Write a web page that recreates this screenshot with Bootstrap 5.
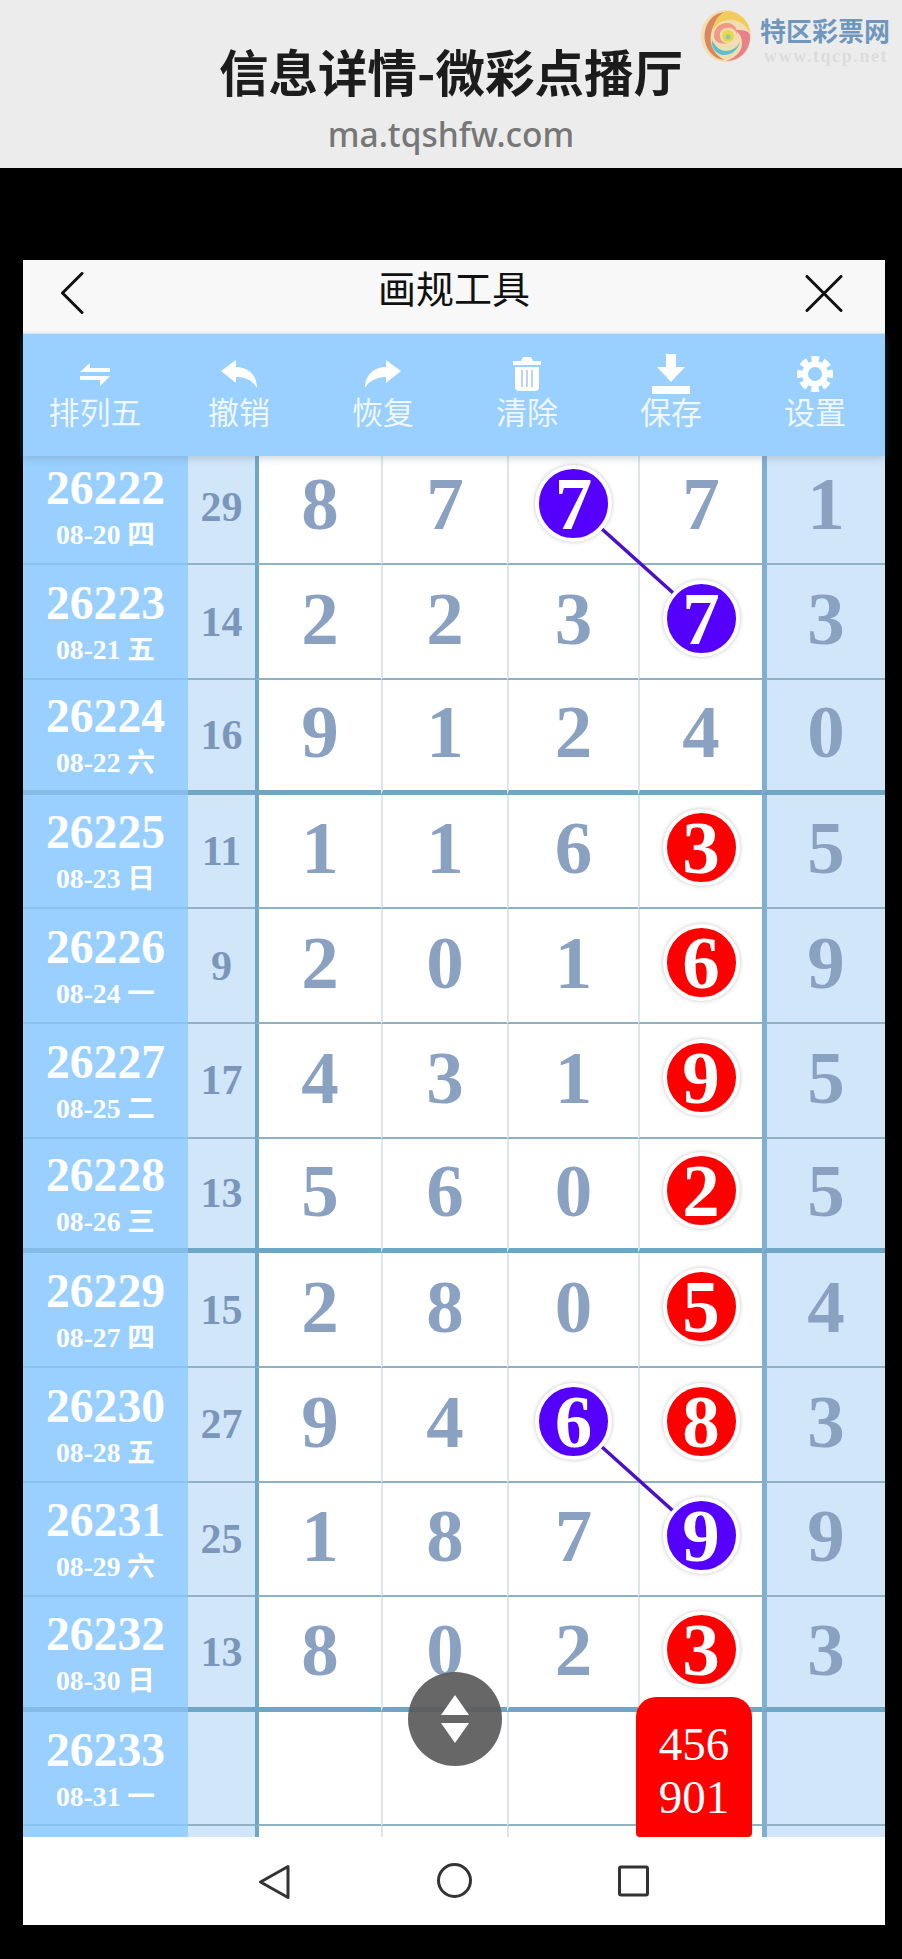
<!DOCTYPE html>
<html lang="zh">
<head>
<meta charset="utf-8">
<title>画规工具</title>
<link href="https://cdn.jsdelivr.net/npm/bootstrap@5.3.0/dist/css/bootstrap.min.css" rel="stylesheet">
<style>
html,body{background:#000;margin:0;height:1959px;overflow:hidden}
.pagehead{height:168px;background:#ececec;font-family:"Noto Sans CJK SC",sans-serif}
.headtitle{font-size:49.5px;font-weight:700;line-height:60px;padding-top:41px;color:#1c1c1c}
.headurl{font-size:33.5px;line-height:46px;color:#777;font-family:"Noto Sans",sans-serif;font-weight:500;padding-top:10px}
.logobox{top:9px;left:700px}
.logoname{left:60px;top:5px;font-size:26px;font-weight:700;line-height:32px;color:#6f97bd;white-space:nowrap}
.logourl{left:64px;top:38px;font:700 18px/18px "Liberation Serif",serif;color:#dcdcdc;letter-spacing:1.6px;white-space:nowrap}
.phone{margin:92px 17px 0 23px;width:862px;font-family:"Noto Sans CJK SC",sans-serif}
.topbar{height:73px;background:#f8f8f8;color:#111}
.toptitle{font-size:38px;line-height:54px;height:54px}
.chevron{left:37px;top:12px}
.closex{left:782px;top:15px}
.toolbar{height:123px;background:#99d0ff;box-shadow:0 3px 7px rgba(110,130,150,.3);z-index:3;padding-top:20px;border-top:1px solid #cfe6fb}
.toolitem{width:144px;flex:none;color:rgba(255,255,255,.85)}
.toolicon{height:40px}
.toollabel{font-size:31px;line-height:36px;margin-top:-1px}
.boardwrap{height:1381px;background:#fff}
.rowsbox{margin-top:-5.4px;font-family:"Liberation Serif","Noto Sans CJK SC",serif;font-weight:700}
.drow{height:114.67px}
.drow>div{border-bottom:2px solid #8fb1c2;box-sizing:border-box}
.drow.heavy>div{border-bottom:5px solid #6fa6c6}
.drow>.cissue{width:165px;background:#99d0ff;color:#fff;border-bottom-color:#8cc3ee;padding-top:3px}
.drow.heavy>.cissue{border-bottom-color:#85bbe6}
.drow>.csum{width:67px;background:#d2e6f9;color:#7a97bb;font-size:42px;padding-top:1px}
.drow>.cnum{color:#8aa1c1;font-size:75px;line-height:1;background:#fff;padding-bottom:6px}
.cnum.w1{width:126px;border-left:4px solid #6fa6c6}
.cnum.w2{width:126px;border-left:2px solid #dfe6ea}
.cnum.w3{width:131px;border-left:2px solid #dfe6ea}
.cnum.w4{width:124px;border-left:2px solid #dfe6ea}
.drow>.cside{width:123px;background:#d2e6f9;color:#8aa1c1;font-size:75px;line-height:1;border-left:5px solid #82aecf;padding-bottom:6px}
.issuenum{font-size:47.6px;line-height:48px}
.issuedate{font-size:27.6px;line-height:34px;margin-top:6px}
.ball{width:77px;height:77px;border:4px solid #fff;color:#fff;box-shadow:0 0 4px rgba(120,120,120,.45);z-index:2}
.ball-p{background:#5500ff}
.ball-r{background:#f00}
.linklayer{left:0;top:0;z-index:1;pointer-events:none}
.pickbox{left:613px;top:1241px;width:116px;height:140px;background:#f00;color:#fff;border-radius:20px 20px 4px 4px;z-index:2;font:400 47px/53px "Liberation Serif",serif;padding-top:21px}
.scrollbtn{left:385px;top:1216px;width:94px;height:94px;background:rgba(90,90,90,.92);z-index:4}
.bottomnav{height:88px;background:#fff;z-index:3}
</style>
</head>
<body>
<header class="pagehead position-relative text-center">
  <div class="headtitle">信息详情-微彩点播厅</div>
  <div class="headurl">ma.tqshfw.com</div>
  <div class="logobox position-absolute">
    <svg width="52" height="54" viewBox="0 0 52 54" class="d-block">
      <ellipse cx="26" cy="27" rx="25" ry="26" fill="#f1ddaf"/>
      <path d="M26 3C10 4 3 18 5 32c2 11 10 18 19 19C14 45 9 36 11 25 13 14 19 7 26 3Z" fill="#d9875f"/>
      <path d="M26 2c13 0 23 10 24 22-5-9-12-14-22-13C20 12 15 16 13 22 14 12 18 6 26 2Z" fill="#f0cc5e"/>
      <path d="M50 26c1 14-9 26-24 26 9-3 16-9 16-18 0-6-3-11-8-13 9 0 14 0 16 5Z" fill="#e8828a"/>
      <path d="M40 33c-2 8-9 14-18 13-7-2-11-8-10-15 3 6 7 10 13 11 6 0 12-3 15-9Z" fill="#5cc0cf"/>
      <path d="M14 27c0-8 6-13 13-13 7 0 11 6 10 12-1-5-5-8-10-7-5 0-8 4-7 9 1 4 4 6 8 6-7 2-14-1-14-7Z" fill="#ee9a84"/>
      <ellipse cx="28" cy="27" rx="6" ry="6" fill="#e7d64f"/>
      <ellipse cx="28" cy="28" rx="2.5" ry="2.5" fill="#8fc9a8"/>
    </svg>
    <div class="logoname position-absolute">特区彩票网</div>
    <div class="logourl position-absolute">www.tqcp.net</div>
  </div>
</header>

<main class="phone">
  <div class="topbar position-relative text-center">
    <svg class="chevron position-absolute" width="24" height="42" viewBox="0 0 24 42"><path d="M22 1.5 2.5 21 22 40.500" fill="none" stroke="#111" stroke-width="3" stroke-linecap="round" stroke-linejoin="round"/></svg>
    <div class="toptitle">画规工具</div>
    <svg class="closex position-absolute" width="38" height="37" viewBox="0 0 38 37"><path d="M2 1.500 36 35.500M36 1.500 2 35.500" fill="none" stroke="#111" stroke-width="3" stroke-linecap="round"/></svg>
  </div>

  <nav class="toolbar position-relative d-flex overflow-hidden">
    <div class="toolitem text-center">
      <div class="toolicon d-flex justify-content-center align-items-center"><svg width="30" height="23" viewBox="0 0 30 23"><path d="M0 9 10 0v5h20v4ZM0 13h30L20 23v-6H0Z" fill="#fff"/></svg></div>
      <div class="toollabel">排列五</div>
    </div>
    <div class="toolitem text-center">
      <div class="toolicon d-flex justify-content-center align-items-center"><svg width="36" height="28" viewBox="0 0 36 28"><path d="M0 11 15 0v7c12 0 21 8 21 21-4-7-11-11-21-11v6Z" fill="#fff"/></svg></div>
      <div class="toollabel">撤销</div>
    </div>
    <div class="toolitem text-center">
      <div class="toolicon d-flex justify-content-center align-items-center"><svg width="36" height="28" viewBox="0 0 36 28"><path d="M36 11 21 0v7C9 7 0 15 0 28c4-7 11-11 21-11v6Z" fill="#fff"/></svg></div>
      <div class="toollabel">恢复</div>
    </div>
    <div class="toolitem text-center">
      <div class="toolicon d-flex justify-content-center align-items-center"><svg width="30" height="34" viewBox="0 0 30 34"><path d="M9 4 11 0h8l2 4h8v4H1V4ZM3 10h24v20a4 4 0 0 1-4 4H7a4 4 0 0 1-4-4Z" fill="#fff"/><path d="M10 13v17M15 13v17M20 13v17" stroke="#a9c9e6" stroke-width="1.500"/></svg></div>
      <div class="toollabel">清除</div>
    </div>
    <div class="toolitem text-center">
      <div class="toolicon d-flex justify-content-center align-items-center"><svg width="38" height="40" viewBox="0 0 38 40"><path d="M14 0h10v13h9L19 28 5 13h9ZM0 32h38v8H0Z" fill="#fff"/></svg></div>
      <div class="toollabel">保存</div>
    </div>
    <div class="toolitem text-center">
      <div class="toolicon d-flex justify-content-center align-items-center"><svg width="36" height="36" viewBox="0 0 36 36"><circle cx="18" cy="18" r="15" fill="none" stroke="#fff" stroke-width="6" stroke-dasharray="7.500 4.280" transform="rotate(-15 18 18)"/><circle cx="18" cy="18" r="10" fill="none" stroke="#fff" stroke-width="6"/></svg></div>
      <div class="toollabel">设置</div>
    </div>
  </nav>

  <section class="boardwrap position-relative overflow-hidden">
    <svg class="linklayer position-absolute" width="862" height="1381">
      <path d="M550 47 678 162M550 965 678 1080" stroke="#4b12c4" stroke-width="3.500" fill="none"/>
    </svg>
    <div class="rowsbox">
      <div class="drow d-flex"><div class="cissue text-center d-flex flex-column justify-content-center"><div class="issuenum">26222</div><div class="issuedate">08-20 四</div></div><div class="csum d-flex justify-content-center align-items-center">29</div><div class="cnum w1 d-flex justify-content-center align-items-center">8</div><div class="cnum w2 d-flex justify-content-center align-items-center">7</div><div class="cnum w3 d-flex justify-content-center align-items-center"><span class="ball ball-p position-relative rounded-circle d-flex justify-content-center align-items-center">7</span></div><div class="cnum w4 d-flex justify-content-center align-items-center">7</div><div class="cside d-flex justify-content-center align-items-center">1</div></div>
      <div class="drow d-flex"><div class="cissue text-center d-flex flex-column justify-content-center"><div class="issuenum">26223</div><div class="issuedate">08-21 五</div></div><div class="csum d-flex justify-content-center align-items-center">14</div><div class="cnum w1 d-flex justify-content-center align-items-center">2</div><div class="cnum w2 d-flex justify-content-center align-items-center">2</div><div class="cnum w3 d-flex justify-content-center align-items-center">3</div><div class="cnum w4 d-flex justify-content-center align-items-center"><span class="ball ball-p position-relative rounded-circle d-flex justify-content-center align-items-center">7</span></div><div class="cside d-flex justify-content-center align-items-center">3</div></div>
      <div class="drow heavy d-flex"><div class="cissue text-center d-flex flex-column justify-content-center"><div class="issuenum">26224</div><div class="issuedate">08-22 六</div></div><div class="csum d-flex justify-content-center align-items-center">16</div><div class="cnum w1 d-flex justify-content-center align-items-center">9</div><div class="cnum w2 d-flex justify-content-center align-items-center">1</div><div class="cnum w3 d-flex justify-content-center align-items-center">2</div><div class="cnum w4 d-flex justify-content-center align-items-center">4</div><div class="cside d-flex justify-content-center align-items-center">0</div></div>
      <div class="drow d-flex"><div class="cissue text-center d-flex flex-column justify-content-center"><div class="issuenum">26225</div><div class="issuedate">08-23 日</div></div><div class="csum d-flex justify-content-center align-items-center">11</div><div class="cnum w1 d-flex justify-content-center align-items-center">1</div><div class="cnum w2 d-flex justify-content-center align-items-center">1</div><div class="cnum w3 d-flex justify-content-center align-items-center">6</div><div class="cnum w4 d-flex justify-content-center align-items-center"><span class="ball ball-r position-relative rounded-circle d-flex justify-content-center align-items-center">3</span></div><div class="cside d-flex justify-content-center align-items-center">5</div></div>
      <div class="drow d-flex"><div class="cissue text-center d-flex flex-column justify-content-center"><div class="issuenum">26226</div><div class="issuedate">08-24 一</div></div><div class="csum d-flex justify-content-center align-items-center">9</div><div class="cnum w1 d-flex justify-content-center align-items-center">2</div><div class="cnum w2 d-flex justify-content-center align-items-center">0</div><div class="cnum w3 d-flex justify-content-center align-items-center">1</div><div class="cnum w4 d-flex justify-content-center align-items-center"><span class="ball ball-r position-relative rounded-circle d-flex justify-content-center align-items-center">6</span></div><div class="cside d-flex justify-content-center align-items-center">9</div></div>
      <div class="drow d-flex"><div class="cissue text-center d-flex flex-column justify-content-center"><div class="issuenum">26227</div><div class="issuedate">08-25 二</div></div><div class="csum d-flex justify-content-center align-items-center">17</div><div class="cnum w1 d-flex justify-content-center align-items-center">4</div><div class="cnum w2 d-flex justify-content-center align-items-center">3</div><div class="cnum w3 d-flex justify-content-center align-items-center">1</div><div class="cnum w4 d-flex justify-content-center align-items-center"><span class="ball ball-r position-relative rounded-circle d-flex justify-content-center align-items-center">9</span></div><div class="cside d-flex justify-content-center align-items-center">5</div></div>
      <div class="drow heavy d-flex"><div class="cissue text-center d-flex flex-column justify-content-center"><div class="issuenum">26228</div><div class="issuedate">08-26 三</div></div><div class="csum d-flex justify-content-center align-items-center">13</div><div class="cnum w1 d-flex justify-content-center align-items-center">5</div><div class="cnum w2 d-flex justify-content-center align-items-center">6</div><div class="cnum w3 d-flex justify-content-center align-items-center">0</div><div class="cnum w4 d-flex justify-content-center align-items-center"><span class="ball ball-r position-relative rounded-circle d-flex justify-content-center align-items-center">2</span></div><div class="cside d-flex justify-content-center align-items-center">5</div></div>
      <div class="drow d-flex"><div class="cissue text-center d-flex flex-column justify-content-center"><div class="issuenum">26229</div><div class="issuedate">08-27 四</div></div><div class="csum d-flex justify-content-center align-items-center">15</div><div class="cnum w1 d-flex justify-content-center align-items-center">2</div><div class="cnum w2 d-flex justify-content-center align-items-center">8</div><div class="cnum w3 d-flex justify-content-center align-items-center">0</div><div class="cnum w4 d-flex justify-content-center align-items-center"><span class="ball ball-r position-relative rounded-circle d-flex justify-content-center align-items-center">5</span></div><div class="cside d-flex justify-content-center align-items-center">4</div></div>
      <div class="drow d-flex"><div class="cissue text-center d-flex flex-column justify-content-center"><div class="issuenum">26230</div><div class="issuedate">08-28 五</div></div><div class="csum d-flex justify-content-center align-items-center">27</div><div class="cnum w1 d-flex justify-content-center align-items-center">9</div><div class="cnum w2 d-flex justify-content-center align-items-center">4</div><div class="cnum w3 d-flex justify-content-center align-items-center"><span class="ball ball-p position-relative rounded-circle d-flex justify-content-center align-items-center">6</span></div><div class="cnum w4 d-flex justify-content-center align-items-center"><span class="ball ball-r position-relative rounded-circle d-flex justify-content-center align-items-center">8</span></div><div class="cside d-flex justify-content-center align-items-center">3</div></div>
      <div class="drow d-flex"><div class="cissue text-center d-flex flex-column justify-content-center"><div class="issuenum">26231</div><div class="issuedate">08-29 六</div></div><div class="csum d-flex justify-content-center align-items-center">25</div><div class="cnum w1 d-flex justify-content-center align-items-center">1</div><div class="cnum w2 d-flex justify-content-center align-items-center">8</div><div class="cnum w3 d-flex justify-content-center align-items-center">7</div><div class="cnum w4 d-flex justify-content-center align-items-center"><span class="ball ball-p position-relative rounded-circle d-flex justify-content-center align-items-center">9</span></div><div class="cside d-flex justify-content-center align-items-center">9</div></div>
      <div class="drow heavy d-flex"><div class="cissue text-center d-flex flex-column justify-content-center"><div class="issuenum">26232</div><div class="issuedate">08-30 日</div></div><div class="csum d-flex justify-content-center align-items-center">13</div><div class="cnum w1 d-flex justify-content-center align-items-center">8</div><div class="cnum w2 d-flex justify-content-center align-items-center">0</div><div class="cnum w3 d-flex justify-content-center align-items-center">2</div><div class="cnum w4 d-flex justify-content-center align-items-center"><span class="ball ball-r position-relative rounded-circle d-flex justify-content-center align-items-center">3</span></div><div class="cside d-flex justify-content-center align-items-center">3</div></div>
      <div class="drow d-flex"><div class="cissue text-center d-flex flex-column justify-content-center"><div class="issuenum">26233</div><div class="issuedate">08-31 一</div></div><div class="csum"></div><div class="cnum w1"></div><div class="cnum w2"></div><div class="cnum w3"></div><div class="cnum w4"></div><div class="cside"></div></div>
      <div class="drow d-flex"><div class="cissue"></div><div class="csum"></div><div class="cnum w1"></div><div class="cnum w2"></div><div class="cnum w3"></div><div class="cnum w4"></div><div class="cside"></div></div>
    </div>
    <div class="pickbox position-absolute text-center">456<br>901</div>
    <div class="scrollbtn position-absolute rounded-circle d-flex flex-column align-items-center justify-content-center gap-2">
      <svg width="28" height="20" viewBox="0 0 28 20" class="d-block"><path d="M14 0 28 20H0Z" fill="#fff"/></svg>
      <svg width="28" height="20" viewBox="0 0 28 20" class="d-block"><path d="M0 0H28L14 20Z" fill="#fff"/></svg>
    </div>
  </section>

  <footer class="bottomnav position-relative d-flex">
    <svg width="862" height="88" viewBox="0 0 862 88" class="d-block"><path d="M265 29.500 237.500 45 265 60.500Z" fill="none" stroke="#333" stroke-width="3" stroke-linejoin="round"/><ellipse cx="431.500" cy="43.500" rx="16" ry="16" fill="none" stroke="#333" stroke-width="3"/><rect x="596.500" y="30" width="28" height="28" rx="1.500" fill="none" stroke="#333" stroke-width="3"/></svg>
  </footer>
</main>
<script src="https://cdn.jsdelivr.net/npm/bootstrap@5.3.0/dist/js/bootstrap.bundle.min.js"></script>
</body>
</html>
